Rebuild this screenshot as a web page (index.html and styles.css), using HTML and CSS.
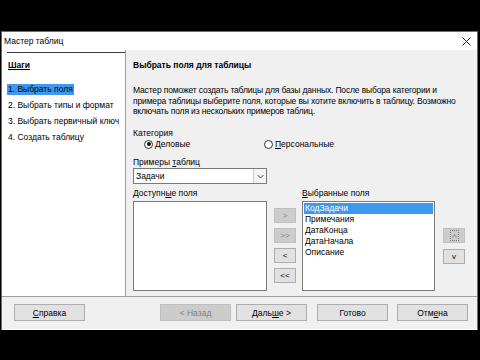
FILE: index.html
```html
<!DOCTYPE html>
<html lang="ru">
<head>
<meta charset="utf-8">
<link rel="stylesheet" href="styles.css">
</head>
<body>
<div class="window">
  <div class="titlebar">
    <span class="title">Мастер таблиц</span>
    <svg class="close" width="9" height="9" viewBox="0 0 9 9"><path d="M0.5 0.5L8.5 8.5M8.5 0.5L0.5 8.5" stroke="#222" stroke-width="1"/></svg>
  </div>
  <div class="main">
    <div class="steps">
      <div class="steps-rule"></div>
      <div class="steps-head">Шаги</div>
      <ul class="steps-list">
        <li><span class="sel">1. Выбрать поля</span></li>
        <li>2. Выбрать типы и формат</li>
        <li>3. Выбрать первичный ключ</li>
        <li>4. Создать таблицу</li>
      </ul>
    </div>
    <div class="content">
      <div class="heading">Выбрать поля для таблицы</div>
      <p class="desc">Мастер поможет создать таблицы для базы данных. После выбора категории и<br>примера таблицы выберите поля, которые вы хотите включить в таблицу. Возможно<br>включать поля из нескольких примеров таблиц.</p>
      <div class="label cat">Категория</div>
      <div class="radios">
        <label class="radio r1"><span class="dot on"></span><span><u>Д</u>еловые</span></label>
        <label class="radio r2"><span class="dot"></span><span><u>П</u>ерсональные</span></label>
      </div>
      <div class="label ex">Примеры <u>т</u>аблиц</div>
      <div class="combo"><span class="combo-text">Задачи</span><span class="combo-btn"><svg width="7" height="5" viewBox="0 0 7 5"><path d="M0.5 1L3.5 4L6.5 1" fill="none" stroke="#555" stroke-width="1"/></svg></span></div>
      <div class="fields">
        <div class="col">
          <div class="label">Доступн<u>ы</u>е поля</div>
          <div class="list avail"></div>
        </div>
        <div class="movers">
          <div class="btn small dis">&gt;</div>
          <div class="btn small dis">&gt;&gt;</div>
          <div class="btn small">&lt;</div>
          <div class="btn small">&lt;&lt;</div>
        </div>
        <div class="col">
          <div class="label"><u>В</u>ыбранные поля</div>
          <div class="list chosen">
            <div class="item sel">КодЗадачи</div>
            <div class="item">Примечания</div>
            <div class="item">ДатаКонца</div>
            <div class="item">ДатаНачала</div>
            <div class="item">Описание</div>
          </div>
        </div>
        <div class="updown">
          <div class="btn small dis"><span class="focus"><svg width="5" height="4" viewBox="0 0 5 4"><path d="M0.5 3.5L2.5 0.5L4.5 3.5" fill="none" stroke="#838383" stroke-width="0.9"/></svg></span></div>
          <div class="btn small">v</div>
        </div>
      </div>
    </div>
  </div>
  <div class="footer">
    <div class="btn wide"><u>С</u>правка</div>
    <div class="spacer"></div>
    <div class="btn wide dis">&lt; Назад</div>
    <div class="btn wide next">Даль<u>ш</u>е &gt;</div>
    <div class="btn wide done">Готово</div>
    <div class="btn wide cancel">Отм<u>е</u>на</div>
  </div>
</div>
</body>
</html>
```

FILE: styles.css
```css
* { box-sizing: border-box; }
html, body { margin: 0; padding: 0; }
body {
  width: 480px;
  height: 360px;
  background: #000;
  font-family: "Liberation Sans", Arial, sans-serif;
  font-size: 8.5px;
  color: #000;
  overflow: hidden;
  white-space: nowrap;
}
u { text-decoration: underline; text-underline-offset: 1px; }
.window {
  margin: 31px 0 0 1px;
  width: 477px;
  height: 299px;
  background: #fff;
  border: 1px solid #6e6e6e;
  border-bottom: none;
  display: flex;
  flex-direction: column;
}
.titlebar {
  height: 18px;
  display: flex;
  align-items: center;
  justify-content: space-between;
  padding: 0 6px 0 2px;
  background: #fff;
}
.main {
  height: 246px;
  display: flex;
}
.steps {
  width: 124px;
  flex: none;
  background: #fff;
  border-right: 1px solid #a0a0a0;
  padding-top: 2px;
}
.steps-rule {
  height: 1px;
  margin-left: 5px;
  background: #3c3c3c;
}
.steps-head {
  margin: 6px 0 0 6px;
  font-weight: bold;
  text-decoration: underline;
  line-height: 12px;
}
.steps-list {
  list-style: none;
  margin: 13px 0 0 0;
  padding: 0 0 0 5px;
}
.steps-list li {
  height: 16px;
  line-height: 11px;
  padding-left: 1px;
}
.steps-list .sel {
  background: #3d98f0;
  display: inline-block;
  padding: 0 1px;
  margin-left: -1px;
}
.content {
  flex: 1;
  background: #f0f0f0;
  padding: 9px 0 0 7px;
}
.heading {
  font-weight: bold;
  line-height: 12px;
}
.desc {
  margin: 14px 0 0 0;
  line-height: 10.5px;
  letter-spacing: -0.15px;
}
.label { line-height: 11px; }
.cat { margin-top: 11px; }
.radios {
  display: flex;
  height: 11px;
}
.radio {
  display: flex;
  align-items: center;
  gap: 2px;
  line-height: 11px;
}
.r1 { margin-left: 11px; width: 120px; }
.dot {
  width: 9px;
  height: 9px;
  border: 1px solid #333;
  border-radius: 50%;
  background: #fff;
  position: relative;
}
.dot.on::after {
  content: "";
  position: absolute;
  left: 1.5px;
  top: 1.5px;
  width: 4px;
  height: 4px;
  border-radius: 50%;
  background: #111;
}
.ex { margin-top: 7px; }
.combo {
  margin-top: 0.5px;
  width: 134px;
  height: 16px;
  background: #fff;
  border: 1px solid #7a7a7a;
  display: flex;
  align-items: center;
  justify-content: space-between;
  padding-left: 2px;
}
.combo-btn {
  width: 13px;
  height: 14px;
  border-left: 1px solid #c8c8c8;
  background: #f4f4f4;
  display: flex;
  align-items: center;
  justify-content: center;
}
.fields {
  display: flex;
  margin-top: 4px;
}
.col { display: flex; flex-direction: column; }
.list {
  margin-top: 2px;
  height: 90px;
  background: #fff;
  border: 1px solid #7a7a7a;
}
.avail { width: 134px; }
.chosen { width: 133px; padding: 1px; }
.item { line-height: 11px; padding-left: 1px; }
.item.sel { background: #3d98f0; color: #fff; }
.movers {
  display: flex;
  flex-direction: column;
  gap: 5px;
  margin: 20px 6px 0 7px;
}
.updown {
  display: flex;
  flex-direction: column;
  gap: 6px;
  margin: 40px 0 0 8px;
}
.btn {
  background: #e1e1e1;
  border: 1px solid #adadad;
  display: flex;
  align-items: center;
  justify-content: center;
  color: #000;
}
.btn.dis {
  background: #cccccc;
  border-color: #bfbfbf;
  color: #838383;
}
.btn.small {
  width: 22px;
  height: 15px;
  font-size: 8px;
}
.focus {
  border: 1px dotted #777;
  width: 9px;
  height: 11px;
  display: flex;
  align-items: center;
  justify-content: center;
}
.footer {
  height: 33px;
  border-top: 1px solid #a0a0a0;
  background: #f0f0f0;
  display: flex;
  padding: 7px 0 0 12px;
}
.spacer { width: 75px; }
.btn.wide {
  width: 71px;
  height: 17px;
}
.next { margin-left: 5px; }
.done { margin-left: 10px; }
.cancel { margin-left: 9px; }
```
